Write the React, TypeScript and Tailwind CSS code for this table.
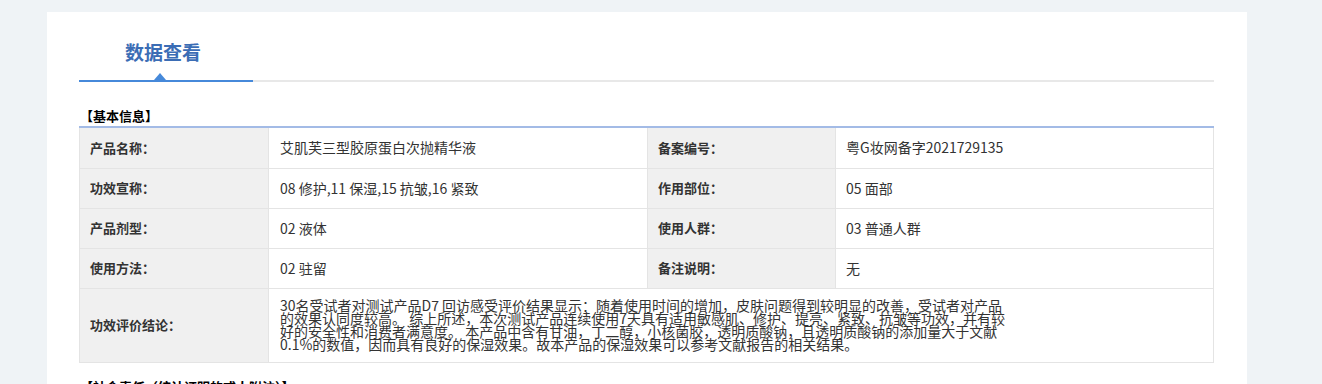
import React from 'react';

const rows: [string, string, string, string][] = [
  ['产品名称：', '艾肌芙三型胶原蛋白次抛精华液', '备案编号：', '粤G妆网备字2021729135'],
  ['功效宣称：', '08 修护,11 保湿,15 抗皱,16 紧致', '作用部位：', '05 面部'],
  ['产品剂型：', '02 液体', '使用人群：', '03 普通人群'],
  ['使用方法：', '02 驻留', '备注说明：', '无'],
];

const conclusion = [
  '30名受试者对测试产品D7 回访感受评价结果显示：随着使用时间的增加，皮肤问题得到较明显的改善，受试者对产品',
  '的效果认同度较高。 综上所述，本次测试产品连续使用7天具有适用敏感肌、修护、提亮、紧致、抗皱等功效，并有较',
  '好的安全性和消费者满意度。 本产品中含有甘油，丁二醇，小核菌胶，透明质酸钠，且透明质酸钠的添加量大于文献',
  '0.1%的数值，因而具有良好的保湿效果。故本产品的保湿效果可以参考文献报告的相关结果。',
];

function SectionTitle({ children }: { children: React.ReactNode }) {
  return (
    <div className="border-b-2 border-[#a3bbe6] pb-[2px] pl-px text-[13px] font-bold leading-[16px] text-black">
      {children}
    </div>
  );
}

export default function App() {
  return (
    <div
      className="min-h-[384px] bg-[#eff3f6] pl-[47px] pt-[12px]"
      style={{ fontFamily: '"Noto Sans CJK SC", "Liberation Sans", sans-serif' }}
    >
      <div className="min-h-[372px] w-[1200px] bg-white px-[32px] pr-[33px]">
        {/* Tabs */}
        <div className="relative h-[70px]">
          <div className="flex h-[68px] items-start pt-[28px]">
            <div className="w-[174px] pl-[46px] text-[19px] font-bold leading-[24px] text-[#3b6db5]">
              数据查看
            </div>
          </div>
          <div className="flex h-[2px]">
            <div className="w-[174px] bg-[#4689da]" />
            <div className="flex-1 bg-[#e8e8e8]" />
          </div>
          <div className="absolute left-[75px] top-[61px] h-0 w-0 border-x-[6.5px] border-b-[7px] border-x-transparent border-b-[#4689da]" />
        </div>

        {/* 基本信息 */}
        <div className="mt-[26px]">
          <SectionTitle>【基本信息】</SectionTitle>
          <table className="w-full table-fixed border-collapse text-[#333]">
            <colgroup>
              <col className="w-[189px]" />
              <col className="w-[379px]" />
              <col className="w-[188px]" />
              <col />
            </colgroup>
            <tbody>
              {rows.map((r) => (
                <tr key={r[0]} className="h-[40px]">
                  <td className="border border-t-0 border-[#e4e4e4] bg-[#f0f0f0] pl-[10px] text-[13px] font-bold">
                    {r[0]}
                  </td>
                  <td className="border border-t-0 border-[#e4e4e4] pl-[11px] text-[14px]">{r[1]}</td>
                  <td className="border border-t-0 border-[#e4e4e4] bg-[#f0f0f0] pl-[10px] text-[13px] font-bold">
                    {r[2]}
                  </td>
                  <td className="border border-t-0 border-[#e4e4e4] pl-[10px] text-[14px]">{r[3]}</td>
                </tr>
              ))}
              <tr className="h-[74px]">
                <td className="border border-[#e4e4e4] bg-[#f0f0f0] pl-[10px] text-[13px] font-bold">
                  功效评价结论：
                </td>
                <td colSpan={3} className="border border-[#e4e4e4] pl-[11px] text-[14px] leading-[13px]">
                  {conclusion.map((line) => (
                    <div key={line} className="whitespace-nowrap">
                      {line}
                    </div>
                  ))}
                </td>
              </tr>
            </tbody>
          </table>
        </div>

        {/* 下一节 */}
        <div className="mt-[16px]">
          <SectionTitle>【社会责任（统计证明的或人附注）】</SectionTitle>
        </div>
      </div>
    </div>
  );
}
